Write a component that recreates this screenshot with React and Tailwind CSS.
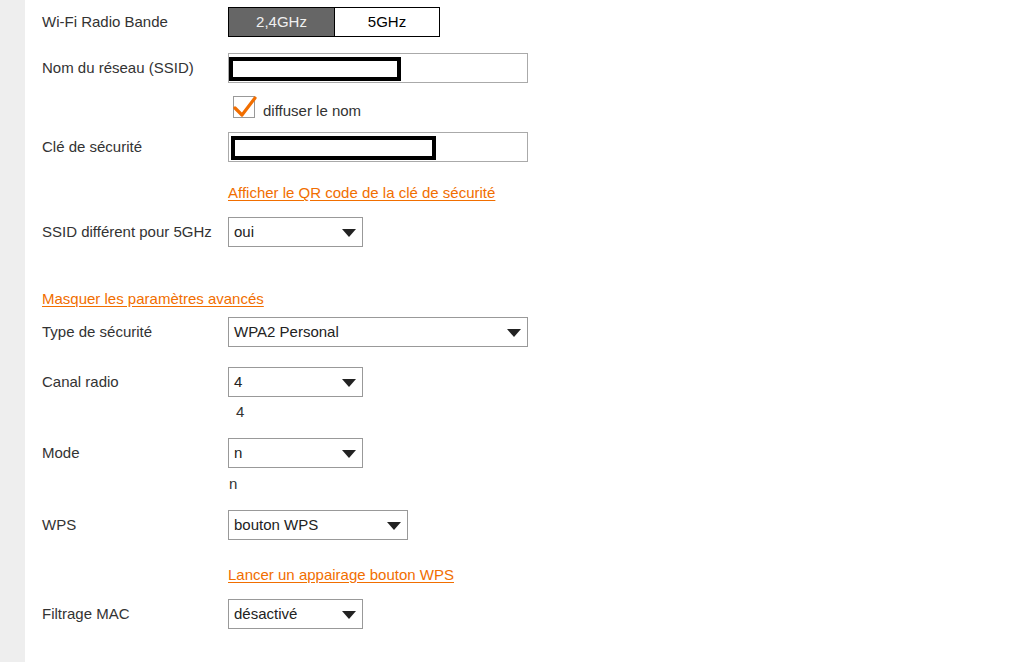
import React from "react";

const font = { fontFamily: '"Liberation Sans", Arial, sans-serif' };

function Arrow() {
  return (
    <svg width="14" height="8" viewBox="0 0 14 8" className="absolute right-[6px] top-[11px]">
      <polygon points="0,0 14,0 7,8" fill="#222" />
    </svg>
  );
}

function Select({ value, width }) {
  return (
    <div className={`relative flex h-[30px] items-center border border-[#999] bg-white pl-[5px] text-[15px] text-[#222] ${width}`}>
      <span>{value}</span>
      <Arrow />
    </div>
  );
}

function Row({ label, mt, children }) {
  return (
    <div className={`flex items-center ${mt}`}>
      <div className="w-[186px] text-[15px] text-[#333]">{label}</div>
      {children}
    </div>
  );
}

function Link({ children }) {
  return (
    <a href="#" className="text-[15px] leading-[20px] text-[#f16e00] underline underline-offset-2">
      {children}
    </a>
  );
}

export default function App() {
  return (
    <div className="flex min-h-screen bg-white" style={font}>
      <div className="w-[25px] shrink-0 bg-[#eeeeee]" />
      <div className="flex-1 pl-[17px] pt-[7px]">
        <Row label="Wi-Fi Radio Bande" mt="mt-0">
          <div className="flex h-[30px] w-[212px] border border-black text-[15px]">
            <div className="flex w-[106px] items-center justify-center border-r border-black bg-[#666] text-[#f0f0f0]">2,4GHz</div>
            <div className="flex flex-1 items-center justify-center bg-white text-black">5GHz</div>
          </div>
        </Row>

        <Row label="Nom du réseau (SSID)" mt="mt-[16px]">
          <div className="h-[30px] w-[300px] border border-[#aaa] bg-white pt-[3px]">
            <div className="h-[24px] w-[172px] border-[4px] border-black bg-white" />
          </div>
        </Row>

        <div className="ml-[191px] mt-[13px] flex h-[22px] items-center">
          <div className="relative h-[22px] w-[22px] border border-[#999] bg-white">
            <svg width="24" height="24" viewBox="0 0 24 24" className="absolute -left-[1px] -top-[1px]">
              <polyline points="2,12 9,19 22,2" fill="none" stroke="#f16e00" strokeWidth="3.2" strokeLinecap="round" strokeLinejoin="round" />
            </svg>
          </div>
          <span className="ml-[8px] mt-[8px] text-[15px] text-[#333]">diffuser le nom</span>
        </div>

        <Row label="Clé de sécurité" mt="mt-[14px]">
          <div className="h-[30px] w-[300px] border border-[#aaa] bg-white pl-[2px] pt-[3px]">
            <div className="h-[24px] w-[205px] border-[4px] border-black bg-white" />
          </div>
        </Row>

        <div className="ml-[186px] mt-[19px] h-[20px]">
          <Link>Afficher le QR code de la clé de sécurité</Link>
        </div>

        <Row label="SSID différent pour 5GHz" mt="mt-[16px]">
          <Select value="oui" width="w-[135px]" />
        </Row>

        <div className="mt-[40px] h-[20px]">
          <Link>Masquer les paramètres avancés</Link>
        </div>

        <Row label="Type de sécurité" mt="mt-[10px]">
          <Select value="WPA2 Personal" width="w-[300px]" />
        </Row>

        <Row label="Canal radio" mt="mt-[20px]">
          <Select value="4" width="w-[135px]" />
        </Row>
        <div className="ml-[194px] mt-[5px] h-[20px] text-[15px] leading-[20px] text-[#333]">4</div>

        <Row label="Mode" mt="mt-[16px]">
          <Select value="n" width="w-[135px]" />
        </Row>
        <div className="ml-[187px] mt-[6px] h-[20px] text-[15px] leading-[20px] text-[#333]">n</div>

        <Row label="WPS" mt="mt-[16px]">
          <Select value="bouton WPS" width="w-[180px]" />
        </Row>

        <div className="ml-[186px] mt-[23px] h-[20px]">
          <Link>Lancer un appairage bouton WPS</Link>
        </div>

        <Row label="Filtrage MAC" mt="mt-[16px]">
          <Select value="désactivé" width="w-[135px]" />
        </Row>
      </div>
    </div>
  );
}
